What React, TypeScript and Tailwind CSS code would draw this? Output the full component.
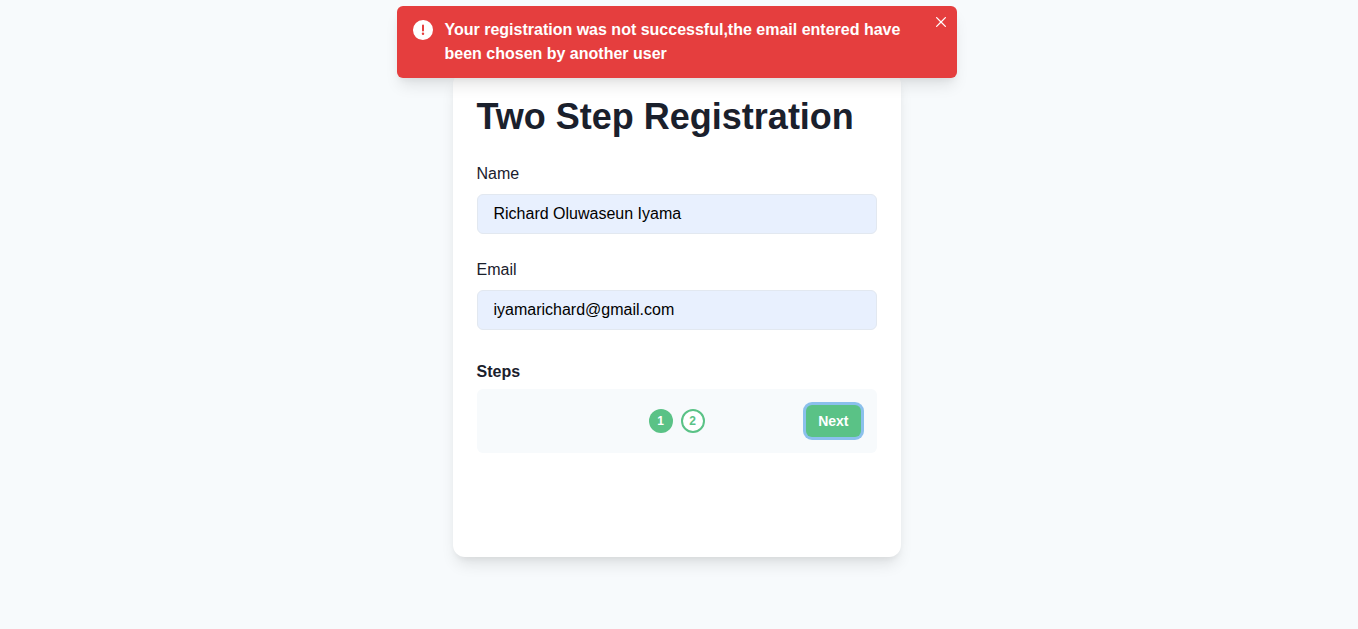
import React from "react";

function Alert() {
  return (
    <div
      role="alert"
      className="absolute left-[396.5px] top-1.5 flex w-[560px] items-start rounded-md bg-[#e53e3e] py-3 pl-4 pr-8 text-white shadow-[0_10px_15px_-3px_rgba(0,0,0,0.1),0_4px_6px_-2px_rgba(0,0,0,0.05)]"
    >
      <span className="mr-3 flex h-6 w-5 shrink-0 items-center">
        <svg viewBox="0 0 24 24" className="h-5 w-5" fill="currentColor">
          <path d="M11.983,0a12.206,12.206,0,0,0-8.51,3.653A11.8,11.8,0,0,0,0,12.207,11.779,11.779,0,0,0,11.8,24h.214A12.111,12.111,0,0,0,24,11.791h0A11.766,11.766,0,0,0,11.983,0ZM10.5,16.542a1.476,1.476,0,0,1,1.449-1.53h.027a1.527,1.527,0,0,1,1.523,1.47,1.475,1.475,0,0,1-1.449,1.53h-.027A1.529,1.529,0,0,1,10.5,16.542ZM10.8,12.5v-6a1.2,1.2,0,0,1,2.4,0v6a1.2,1.2,0,1,1-2.4,0Z" />
        </svg>
      </span>
      <p className="flex-1 text-base font-bold leading-6">
        Your registration was not successful,the email entered have been chosen by another user
      </p>
      <button aria-label="Close" className="absolute right-1 top-1 flex h-6 w-6 items-center justify-center">
        <svg viewBox="0 0 24 24" className="h-2.5 w-2.5" fill="currentColor">
          <path d="M.439,21.44a1.5,1.5,0,0,0,2.122,2.121L11.823,14.3a.25.25,0,0,1,.354,0l9.262,9.263a1.5,1.5,0,1,0,2.122-2.121L14.3,12.177a.25.25,0,0,1,0-.354l9.263-9.262A1.5,1.5,0,0,0,21.439.44L12.177,9.7a.25.25,0,0,1-.354,0L2.561.44A1.5,1.5,0,0,0,.439,2.561L9.7,11.823a.25.25,0,0,1,0,.354Z" />
        </svg>
      </button>
    </div>
  );
}

function Field({ label, value }: { label: string; value: string }) {
  return (
    <label className="mb-6 block">
      <span className="mb-2 block leading-6">{label}</span>
      <input
        defaultValue={value}
        className="block h-10 w-full rounded-md border border-[#e2e8f0] bg-[#e8f0fe] px-4 text-base text-black outline-none"
      />
    </label>
  );
}

export default function App() {
  return (
    <div className="relative flex h-[629px] justify-center overflow-hidden bg-[#f7fafc] pr-[5px] pt-[72px] font-['Liberation_Sans',Arial,sans-serif] text-base text-[#1a202c]">
      <main className="h-[485px] w-[448px] rounded-xl bg-white px-6 pt-[22px] shadow-[0_10px_15px_-3px_rgba(0,0,0,0.1),0_4px_6px_-2px_rgba(0,0,0,0.05)]">
        <h1 className="mb-[23px] whitespace-nowrap text-4xl font-bold leading-[45px]">Two Step Registration</h1>
        <Field label="Name" value="Richard Oluwaseun Iyama" />
        <Field label="Email" value="iyamarichard@gmail.com" />
        <h2 className="mt-[30px] mb-[5px] font-bold leading-6">Steps</h2>
        <div className="grid h-16 grid-cols-[124px_120px_124px] items-center rounded-md bg-[#f7fafc] px-4">
          <div className="col-start-2 flex justify-center gap-2 text-xs font-bold">
            <span className="flex h-6 w-6 items-center justify-center rounded-full bg-[#5ac286] text-white">1</span>
            <span className="flex h-6 w-6 items-center justify-center rounded-full border-2 border-[#5ac286] bg-white text-[#5ac286]">2</span>
          </div>
          <button className="h-8 justify-self-end rounded-md bg-[#5ac286] px-3 text-sm font-bold text-white shadow-[0_0_0_3px_rgba(66,153,225,0.6)]">
            Next
          </button>
        </div>
      </main>
      <Alert />
    </div>
  );
}
